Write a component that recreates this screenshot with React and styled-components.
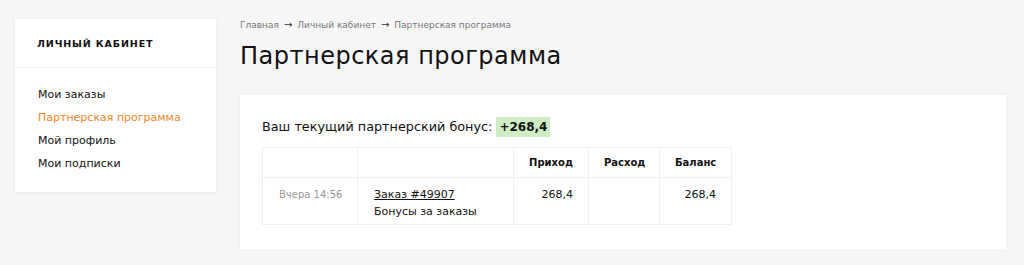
import React from 'react';
import styled, { createGlobalStyle } from 'styled-components';

const GlobalStyle = createGlobalStyle`
  body {
    margin: 0;
    background: #f6f6f6;
    font-family: "DejaVu Sans", "Noto Sans", sans-serif;
    color: #111;
  }
`;

const Page = styled.div`
  display: flex;
  align-items: flex-start;
  gap: 24px;
  padding: 18px 18px 0 15px;
`;

const Sidebar = styled.aside`
  width: 201px;
  margin-top: 1px;
  background: #fff;
  box-shadow: 0 1px 4px rgba(0, 0, 0, 0.06);
`;

const SidebarTitle = styled.div`
  height: 48px;
  display: flex;
  align-items: center;
  padding-left: 22px;
  border-bottom: 1px solid #efefef;
  font-size: 9.5px;
  font-weight: bold;
  letter-spacing: 0.9px;
  text-transform: uppercase;
`;

const Menu = styled.nav`
  display: flex;
  flex-direction: column;
  padding: 15px 0 17px 23px;
`;

const MenuItem = styled.a`
  font-size: 11px;
  line-height: 23px;
  color: ${(p) => (p.$active ? '#f0872a' : '#111')};
  text-decoration: none;
`;

const Main = styled.main`
  flex: 1;
`;

const Crumbs = styled.div`
  display: flex;
  align-items: center;
  gap: 5px;
  font-size: 9px;
  line-height: 14px;
  color: #777;
`;

const Arrow = styled.span`
  color: #333;
  font-size: 10px;
`;

const Title = styled.h1`
  margin: 8px 0 0;
  font-size: 24px;
  line-height: 32px;
  font-weight: 500;
  letter-spacing: 0.5px;
`;

const Card = styled.section`
  margin-top: 23px;
  background: #fff;
  padding: 22px 22px 24px;
  box-shadow: 0 1px 4px rgba(0, 0, 0, 0.06);
`;

const Bonus = styled.div`
  display: flex;
  align-items: center;
  gap: 4px;
  font-size: 12.8px;
  line-height: 20px;
`;

const Badge = styled.span`
  background: #cdeec3;
  font-size: 12px;
  font-weight: bold;
  padding: 0 3px;
`;

const Table = styled.table`
  margin-top: 10px;
  width: 469px;
  table-layout: fixed;
  border-collapse: collapse;
  font-size: 11px;
  line-height: 17px;
`;

const Th = styled.th`
  width: ${(p) => p.$w}px;
  height: 30px;
  box-sizing: border-box;
  padding: 0 15px;
  border: 1px solid #efefef;
  text-align: right;
  font-size: 10px;
  font-weight: bold;
`;

const Td = styled.td`
  padding: 8px 15px 4px 16px;
  border: 1px solid #efefef;
  vertical-align: top;
  white-space: nowrap;
  text-align: ${(p) => p.$align || 'left'};
  color: ${(p) => (p.$muted ? '#999' : '#111')};
  font-size: ${(p) => (p.$muted ? '10px' : '11px')};
`;

const OrderLink = styled.a`
  color: #111;
  text-decoration: underline;
`;

export default function App() {
  return (
    <>
      <GlobalStyle />
      <Page>
        <Sidebar>
          <SidebarTitle>Личный кабинет</SidebarTitle>
          <Menu>
            <MenuItem>Мои заказы</MenuItem>
            <MenuItem $active>Партнерская программа</MenuItem>
            <MenuItem>Мой профиль</MenuItem>
            <MenuItem>Мои подписки</MenuItem>
          </Menu>
        </Sidebar>
        <Main>
          <Crumbs>
            <span>Главная</span>
            <Arrow>→</Arrow>
            <span>Личный кабинет</span>
            <Arrow>→</Arrow>
            <span>Партнерская программа</span>
          </Crumbs>
          <Title>Партнерская программа</Title>
          <Card>
            <Bonus>
              Ваш текущий партнерский бонус: <Badge>+268,4</Badge>
            </Bonus>
            <Table>
              <thead>
                <tr>
                  <Th $w={95} />
                  <Th $w={156} />
                  <Th $w={75}>Приход</Th>
                  <Th $w={71}>Расход</Th>
                  <Th $w={72}>Баланс</Th>
                </tr>
              </thead>
              <tbody>
                <tr>
                  <Td $muted>Вчера 14:56</Td>
                  <Td>
                    <OrderLink>Заказ #49907</OrderLink>
                    <br />
                    Бонусы за заказы
                  </Td>
                  <Td $align="right">268,4</Td>
                  <Td />
                  <Td $align="right">268,4</Td>
                </tr>
              </tbody>
            </Table>
          </Card>
        </Main>
      </Page>
    </>
  );
}
